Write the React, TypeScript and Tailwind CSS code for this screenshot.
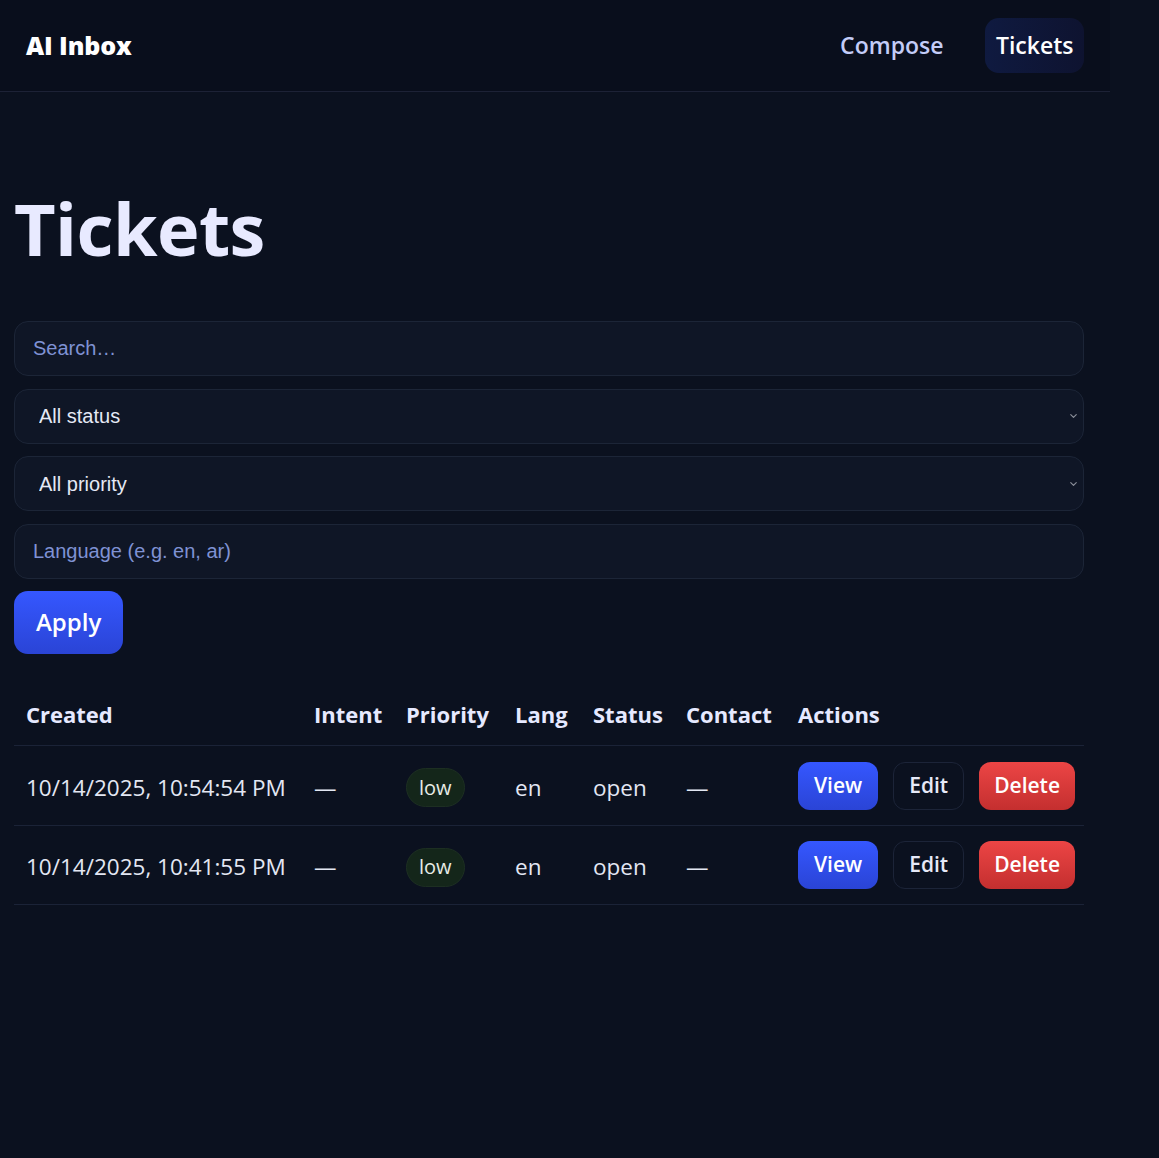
import { ChevronDown } from "lucide-react";

type Ticket = {
  created: string;
  intent: string;
  priority: string;
  lang: string;
  status: string;
  contact: string;
};

const tickets: Ticket[] = [
  { created: "10/14/2025, 10:54:54 PM", intent: "—", priority: "low", lang: "en", status: "open", contact: "—" },
  { created: "10/14/2025, 10:41:55 PM", intent: "—", priority: "low", lang: "en", status: "open", contact: "—" },
];

const fieldClass =
  "h-[55px] w-full rounded-[14px] border border-[#1c2537] bg-[#0f1626] text-[20px] text-[#e5e9f5] outline-none [font-family:'Liberation_Sans',Arial,sans-serif]";

function SelectField({ label }: { label: string }) {
  return (
    <div className="relative">
      <select className={`${fieldClass} appearance-none pl-[24px] pr-8`} defaultValue="">
        <option value="">{label}</option>
      </select>
      <ChevronDown
        className="pointer-events-none absolute right-[5px] top-1/2 h-[11px] w-[11px] -translate-y-1/2 text-[#8b8f99]"
        strokeWidth={2.5}
      />
    </div>
  );
}

export default function App() {
  return (
    <div className="min-h-[1158px] bg-[#0b111f] text-[#e6e9fb] [font-family:'Open_Sans',sans-serif]">
      <header className="flex h-[92px] w-[1110px] items-center justify-between border-b border-[#1d2236] bg-[#090e1c] px-[26px]">
        <span className="text-[25px] font-black tracking-[-0.1px] text-white">AI Inbox</span>
        <nav className="flex items-center gap-[20px]">
          <a className="rounded-[14px] px-[22px] py-[10px] text-[23px] font-semibold text-[#c3ccf8]">Compose</a>
          <a className="rounded-[14px] bg-gradient-to-r from-[#0f1a40] to-[#0e1330] px-[10.5px] py-[10px] text-[23px] font-semibold text-white">
            Tickets
          </a>
        </nav>
      </header>

      <main className="w-[1098px] px-[14px]">
        <h1 className="mt-[100px] text-[72px] font-bold leading-none tracking-[-0.6px] text-[#e8eaff]">Tickets</h1>

        <div className="mt-[57px] flex flex-col gap-[12.67px]">
          <input className={`${fieldClass} px-[18px] placeholder:text-[#7f92d4]`} placeholder="Search…" />
          <SelectField label="All status" />
          <SelectField label="All priority" />
          <input className={`${fieldClass} px-[18px] placeholder:text-[#7f92d4]`} placeholder="Language (e.g. en, ar)" />
        </div>

        <button className="mt-[12px] h-[63px] rounded-[14px] bg-gradient-to-b from-[#3557ff] to-[#2a44d6] px-[22px] text-[24px] font-semibold text-white">
          Apply
        </button>

        <table className="mt-[32px] w-[1070px] table-fixed border-collapse text-left">
          <colgroup>
            <col className="w-[288px]" />
            <col className="w-[92px]" />
            <col className="w-[109px]" />
            <col className="w-[78px]" />
            <col className="w-[93px]" />
            <col className="w-[112px]" />
            <col className="w-[298px]" />
          </colgroup>
          <thead>
            <tr className="h-[60px] border-b border-[#1b2337]">
              {["Created", "Intent", "Priority", "Lang", "Status", "Contact", "Actions"].map((h) => (
                <th key={h} className="whitespace-nowrap px-[12px] pb-[2px] text-[22px] font-bold text-[#e6e9ff]">
                  {h}
                </th>
              ))}
            </tr>
          </thead>
          <tbody>
            {tickets.map((t) => (
              <tr key={t.created} className="h-[79.5px] border-b border-[#1b2337] text-[22.5px] text-[#e3e7f3]">
                <td className="whitespace-nowrap px-[12px] pt-[4px]">{t.created}</td>
                <td className="px-[12px] pt-[4px]">{t.intent}</td>
                <td className="px-[12px] pt-[4px]">
                  <span className="inline-flex h-[39px] items-center rounded-full border border-[#1d2f22] bg-[#14261a] px-[12px] text-[20px] text-[#e6ebe6]">
                    {t.priority}
                  </span>
                </td>
                <td className="px-[12px] pt-[4px]">{t.lang}</td>
                <td className="px-[12px] pt-[4px]">{t.status}</td>
                <td className="px-[12px] pt-[4px]">{t.contact}</td>
                <td className="px-[12px]">
                  <div className="flex items-center gap-[15px]">
                    <button className="h-[48px] rounded-[12px] bg-gradient-to-b from-[#3557ff] to-[#2a44d6] px-[16px] text-[21px] font-semibold text-white">
                      View
                    </button>
                    <button className="h-[48px] rounded-[12px] border border-[#1c2438] px-[15px] text-[21px] font-semibold text-[#e6e9f7]">
                      Edit
                    </button>
                    <button className="h-[48px] rounded-[12px] bg-gradient-to-b from-[#ec4545] to-[#c42f2f] px-[15px] text-[21px] font-semibold text-white">
                      Delete
                    </button>
                  </div>
                </td>
              </tr>
            ))}
          </tbody>
        </table>
      </main>
    </div>
  );
}
